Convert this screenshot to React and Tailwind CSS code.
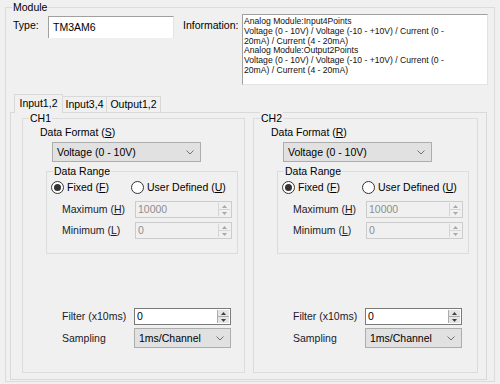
import React from "react";

const FONT = { fontFamily: '"Liberation Sans", Arial, sans-serif' };

function Group({ label, className, children, labelLeft = "left-[6px]" }) {
  return (
    <div className={"relative border border-[#dcdcdc] " + className}>
      <span className={"absolute -top-[7px] bg-[#f0f0f0] px-[1px] leading-[13px] text-[#000] " + labelLeft}>
        {label}
      </span>
      {children}
    </div>
  );
}

function U({ children }) {
  return <span className="underline underline-offset-[1px]">{children}</span>;
}

function Chevron() {
  return (
    <svg width="8" height="5" viewBox="0 0 8 5" className="shrink-0">
      <polyline points="0.5,0.5 4,4 7.5,0.5" fill="none" stroke="#707070" strokeWidth="1" />
    </svg>
  );
}

function Combo({ text, className }) {
  return (
    <div className={"flex items-center justify-between border border-[#adadad] bg-[#e1e1e1] pl-[4px] pr-[6px] " + className}>
      <span className="leading-[13px]">{text}</span>
      <Chevron />
    </div>
  );
}

function SpinArrows({ disabled }) {
  const c = disabled ? "#a8a8a8" : "#404040";
  return (
    <div className={"flex h-full w-[12px] flex-col border-l " + (disabled ? "border-[#d5d5d5]" : "border-[#adadad]")}>
      <div className={"flex flex-1 items-center justify-center border-b " + (disabled ? "bg-[#f0f0f0] border-[#d5d5d5]" : "bg-[#e5e5e5] border-[#adadad]")}>
        <svg width="5" height="3" viewBox="0 0 5 3"><polygon points="0,3 2.5,0 5,3" fill={c} /></svg>
      </div>
      <div className={"flex flex-1 items-center justify-center " + (disabled ? "bg-[#f0f0f0]" : "bg-[#e5e5e5]")}>
        <svg width="5" height="3" viewBox="0 0 5 3"><polygon points="0,0 2.5,3 5,0" fill={c} /></svg>
      </div>
    </div>
  );
}

function Spin({ value, disabled }) {
  return (
    <div
      className={
        "flex h-[17px] w-[97px] items-stretch border p-[1px] " +
        (disabled ? "border-[#cccccc] bg-[#f0f0f0] text-[#8d8d8d]" : "border-[#7a7a7a] bg-white text-black")
      }
    >
      <span className="flex-1 pl-[1px] leading-[12px]">{value}</span>
      <SpinArrows disabled={disabled} />
    </div>
  );
}

function Radio({ checked }) {
  return (
    <div className="flex h-[13px] w-[13px] items-center justify-center rounded-full border border-[#333] bg-white">
      {checked && <div className="h-[7px] w-[7px] rounded-full bg-[#333]" />}
    </div>
  );
}

function Channel({ name, fmtKey, className }) {
  return (
    <Group label={name} className={"h-[255px] " + className}>
      <div className="ml-[17px] mt-[7px] leading-[13px]">
        Data Format (<U>{fmtKey}</U>)
      </div>
      <Combo text="Voltage (0 - 10V)" className="ml-[29px] mt-[3px] h-[20px] w-[149px]" />
      <Group label="Data Range" className="ml-[23px] mt-[9px] h-[83px] w-[192px]">
        <div className="ml-[4px] mt-[9px] flex h-[13px] items-center">
          <div className="flex w-[80px] items-center gap-[3px]">
            <Radio checked />
            <span className="leading-[13px]">
              Fixed (<U>F</U>)
            </span>
          </div>
          <div className="flex items-center gap-[3px]">
            <Radio />
            <span className="leading-[13px]">
              User Defined (<U>U</U>)
            </span>
          </div>
        </div>
        <div className="ml-[15px] mt-[7px] flex items-center">
          <span className="w-[73px] leading-[13px] text-[#221a2a]">
            Maximum (<U>H</U>)
          </span>
          <Spin value="10000" disabled />
        </div>
        <div className="ml-[15px] mt-[4px] flex items-center">
          <span className="w-[73px] leading-[13px] text-[#221a2a]">
            Minimum (<U>L</U>)
          </span>
          <Spin value="0" disabled />
        </div>
      </Group>
      <div className="ml-[39px] mt-[54px] flex items-center">
        <span className="w-[72px] leading-[13px] text-[#221a2a]">Filter (x10ms)</span>
        <Spin value="0" />
      </div>
      <div className="ml-[39px] mt-[3px] flex items-center">
        <span className="w-[72px] leading-[13px] text-[#221a2a]">Sampling</span>
        <Combo text="1ms/Channel" className="h-[20px] w-[97px]" />
      </div>
    </Group>
  );
}

export default function App() {
  return (
    <div className="h-[384px] w-[500px] overflow-hidden bg-[#f0f0f0] pl-[5px] pt-[7px] text-[10.5px] text-black" style={FONT}>
      <Group label="Module" className="h-[375px] w-[490px]">
        <div className="mt-[6px] flex items-start">
          <span className="ml-[7px] mt-[5px] w-[35px] leading-[13px]">Type:</span>
          <div className="mt-[2px] flex h-[22px] w-[126px] items-center border-l border-t border-[#a0a0a0] border-b-[#f0f0f0] bg-white pl-[4px] leading-[13px] [border-right:1px_solid_#e3e3e3]">
            TM3AM6
          </div>
          <span className="ml-[9px] mt-[5px] w-[59px] leading-[13px]">Information:</span>
          <div className="h-[71px] w-[246px] border border-[#a0a0a0] border-b-[#e3e3e3] border-r-[#e3e3e3] bg-white pl-[1px] pt-[2px] text-[8.6px] leading-[9.8px] text-[#111]">
            <div>Analog Module:Input4Points</div>
            <div>Voltage (0 - 10V) / Voltage (-10 - +10V) / Current (0 -</div>
            <div>20mA) / Current (4 - 20mA)</div>
            <div>Analog Module:Output2Points</div>
            <div>Voltage (0 - 10V) / Voltage (-10 - +10V) / Current (0 -</div>
            <div>20mA) / Current (4 - 20mA)</div>
          </div>
        </div>
        <div className="ml-[4px] mt-[9px] w-[477px]">
          <div className="flex h-[18px] items-end pl-[4px]">
            <div className="relative z-10 -mb-[1px] flex h-[19px] w-[49px] items-start justify-center border border-b-0 border-[#d9d9d9] bg-[#f0f0f0] pt-[2px] leading-[13px]">
              Input1,2
            </div>
            <div className="flex h-[16px] w-[44px] items-start justify-center border border-b-0 border-l-0 border-[#d9d9d9] bg-[#f0f0f0] pt-[1px] leading-[13px]">
              Input3,4
            </div>
            <div className="flex h-[16px] w-[54px] items-start justify-center border border-b-0 border-l-0 border-[#d9d9d9] bg-[#f0f0f0] pt-[1px] leading-[13px]">
              Output1,2
            </div>
          </div>
          <div className="flex h-[268px] w-[477px] items-start border border-[#d9d9d9] bg-[#f0f0f0] pl-[11px] pt-[5px]">
            <Channel name="CH1" fmtKey="S" className="w-[223px]" />
            <Channel name="CH2" fmtKey="R" className="ml-[8px] w-[225px]" />
          </div>
        </div>
      </Group>
    </div>
  );
}
